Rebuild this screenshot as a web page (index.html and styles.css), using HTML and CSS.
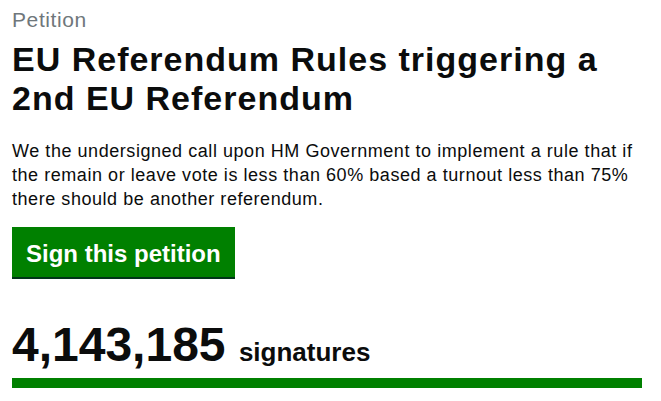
FILE: index.html
```html
<!DOCTYPE html>
<html lang="en">
<head>
  <meta charset="UTF-8" />
  <meta name="viewport" content="width=device-width, initial-scale=1.0" />
  <title>Petition</title>
  <link rel="stylesheet" href="styles.css">
</head>
<body>
  <main class="petition">
    <span class="petition-label">Petition</span>
    <h1>EU Referendum Rules triggering a 2nd EU Referendum</h1>
    <p class="action">We the undersigned call upon HM Government to implement a rule that if the remain or leave vote is less than 60% based a turnout less than 75% there should be another referendum.</p>
    <a class="button" href="#">Sign this petition</a>

    <div class="signature-count">
      <p><span class="count">4,143,185</span> <span class="label">signatures</span></p>
      <div class="bar"><div class="bar-fill" style="width: 100%"></div></div>
    </div>
  </main>
</body>
</html>
```

FILE: styles.css
```css
body {
  margin: 0;
  padding: 0;
  background: #fff;
  color: #0b0c0c;
  font-family: "Liberation Sans", Arial, sans-serif;
}
.petition {
  padding: 6px 19px 0 12px;
}
.petition-label {
  display: block;
  font-size: 21px;
  line-height: 28px;
  letter-spacing: 0.6px;
  color: #6f777b;
}
h1 {
  margin: 6px 0 0;
  font-size: 34px;
  line-height: 39px;
  letter-spacing: 1px;
  font-weight: bold;
}
.action {
  margin: 21px 0 0;
  font-size: 18px;
  line-height: 24px;
  letter-spacing: 0.55px;
}
.button {
  display: block;
  width: max-content;
  margin-top: 16px;
  padding: 12px 14px 8px;
  background-color: #008000;
  box-shadow: 0 2px 0 #003618;
  color: #fff;
  font-size: 24px;
  line-height: 30px;
  font-weight: bold;
  text-decoration: none;
}
.signature-count {
  margin-top: 43px;
}
.signature-count p {
  margin: 0;
  font-size: 48px;
  line-height: 50px;
  font-weight: bold;
}
.label {
  font-size: 26px;
  line-height: 1;
}
.bar {
  margin-top: 8px;
  height: 10px;
}
.bar-fill {
  height: 100%;
  background-color: #008000;
}
```
